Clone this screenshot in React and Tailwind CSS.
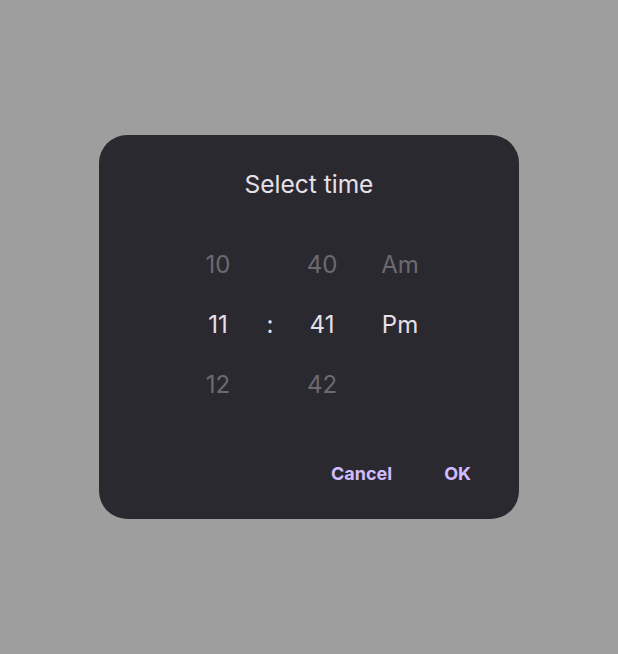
import React, { useState } from "react";

const hours = ["10", "11", "12"];
const minutes = ["40", "41", "42"];
const periods = ["Am", "Pm", ""];

function Column({ items, active, width = "w-16" }) {
  return (
    <div className={`flex flex-col ${width}`}>
      {items.map((item, i) => (
        <div
          key={i}
          className={`h-[60px] flex items-center justify-center text-2xl ${
            i === active ? "text-[#e6e0e9]" : "text-[#6c6970]"
          }`}
        >
          {item}
        </div>
      ))}
    </div>
  );
}

export default function App() {
  const [open] = useState(true);

  return (
    <div
      className="min-h-screen w-full bg-[#9e9e9e] flex items-center justify-center"
      style={{ fontFamily: "Inter, 'Noto Sans', sans-serif" }}
    >
      {open && (
        <div className="w-[420px] h-[384px] rounded-[28px] bg-[#2b2930] flex flex-col">
          {/* title */}
          <h2 className="pt-[33px] text-center text-[24.5px] leading-8 text-[#e6e0e9]">Select time</h2>

          {/* wheel picker */}
          <div className="mt-[35px] flex justify-center">
            <Column items={hours} active={1} />
            <div className="flex flex-col w-10">
              <div className="h-[60px]" />
              <div className="h-[60px] flex items-center justify-center text-2xl text-[#e6e0e9]">:</div>
              <div className="h-[60px]" />
            </div>
            <Column items={minutes} active={1} />
            <div className="w-[14px]" />
            <Column items={periods} active={1} />
          </div>

          {/* actions */}
          <div className="mt-auto mb-[25px] pr-8 flex justify-end gap-5">
            <button className="h-10 px-4 text-lg font-bold text-[#d0bcff]">Cancel</button>
            <button className="h-10 px-4 text-lg font-bold text-[#d0bcff]">OK</button>
          </div>
        </div>
      )}
    </div>
  );
}
